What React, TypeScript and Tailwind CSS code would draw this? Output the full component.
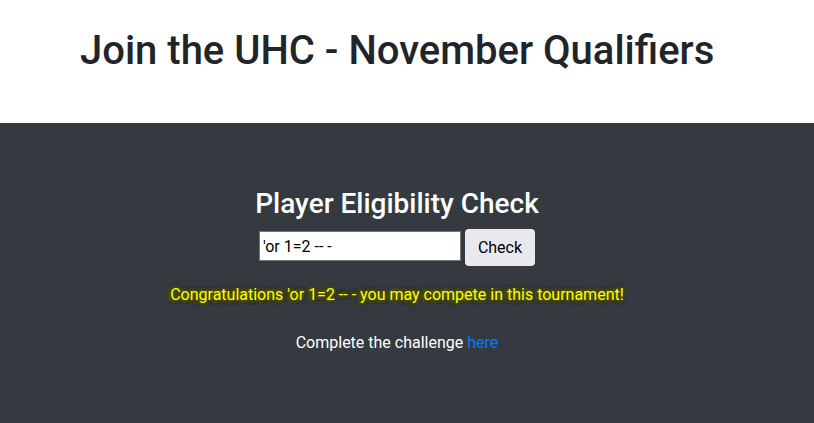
import React from "react";

export default function App() {
  return (
    <div className="min-h-[423px] flex flex-col font-['Roboto',sans-serif]">
      <div className="h-[123px] bg-white pl-[80px] pt-[27px]">
        <h1 className="text-[40px] leading-[48px] font-medium text-[#212529]">
          Join the UHC - November Qualifiers
        </h1>
      </div>
      <div className="flex-1 bg-[#343a40] flex flex-col items-center pt-[64px] pb-[60px] pr-[20px] text-white">
        <h2 className="text-[28px] leading-[34px] font-medium">Player Eligibility Check</h2>
        <div className="flex items-start gap-[4px] mt-[8px]">
          <input
            defaultValue="'or 1=2 -- -"
            className="mt-[2px] w-[202px] h-[30px] bg-white text-black text-[16px] px-[3px] border border-[#767676] outline-none font-['Roboto',sans-serif]"
          />
          <button className="h-[37px] px-[13px] rounded-[4px] bg-[#e9e9ed] text-black text-[16px] font-['Roboto',sans-serif]">
            Check
          </button>
        </div>
        <p className="mt-[17px] text-[16px] leading-[24px] text-[#ffff00] [text-shadow:-2px_0_4px_#4f4f0c,-2px_0_4px_#4f4f0c,-2px_0_4px_#4f4f0c,0_0_4px_#4f4f0c,0_0_4px_#4f4f0c,0_0_4px_#4f4f0c]">
          Congratulations 'or 1=2 -- - you may compete in this tournament!
        </p>
        <p className="mt-[24px] text-[16px] leading-[24px] text-white">
          Complete the challenge <a className="text-[#007bff]" href="#">here</a>
        </p>
      </div>
    </div>
  );
}
